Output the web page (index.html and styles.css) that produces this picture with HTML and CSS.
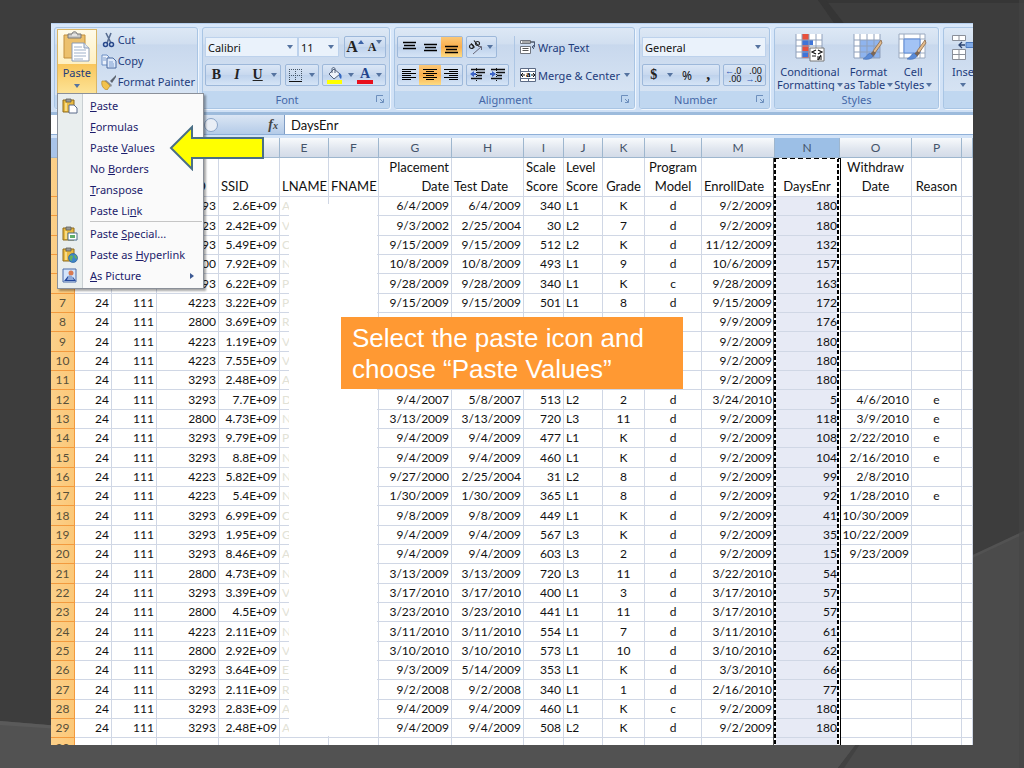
FILE: index.html
```html
<!DOCTYPE html>
<html lang="en">
<head>
<meta charset="utf-8">
<title>Paste Values</title>
<link rel="stylesheet" href="styles.css">
</head>
<body>
<svg class="defs" width="0" height="0" aria-hidden="true">
  <symbol id="caret" viewBox="0 0 6 4"><path d="M0 0h6L3 4z" fill="#5573a0"/></symbol>
  <symbol id="launcher" viewBox="0 0 8 8"><path d="M.5 7V.5H7M4 4l3 3M7.500 4v3.500H4" fill="none" stroke="#6d8fbd"/></symbol>
  <symbol id="clipboard" viewBox="0 0 16 16"><path d="M1 2h11v12H1z" fill="#e9b93f" stroke="#8d6a1c"/><path d="M4 1h5v3H4z" fill="#9a9a94" stroke="#5d5d58" stroke-width=".8"/><path d="M3 5h2v8H3z" fill="#f8dc88"/></symbol>
  <symbol id="brush" viewBox="0 0 20 22"><path d="M18 1 10 12l2 2 7-10z" fill="#e3bb8c" stroke="#8a6a4a" stroke-width=".8"/><path d="m10 12-3 3 3 3 3-4z" fill="#7b6656"/><path d="M7 14c-3 1-3 4-7 6 4 1 9 0 10-3z" fill="#5b8bd6" stroke="#3f69b0" stroke-width=".5"/></symbol>
</svg>
<main class="slide">
  <svg class="backdrop" viewBox="0 0 1024 768" preserveAspectRatio="none" aria-hidden="true">
    <path d="M0 0h1024v768H0z" fill="#3d3d3d"/>
    <path d="M818 0h206v3H824z" fill="#363636"/>
    <path d="M818 0l18 26h10L826 0z" fill="#353535"/>
    <path d="M1024 531v237H840l16-24 117-188z" fill="#4b4b4b"/>
    <path d="M1024 531v3l-60 28v-3z" fill="#525252"/>
    <path d="M0 721l60 5 800 14-22 28H0z" fill="#525252"/>
    <path d="M0 721l60 5v3l-60-4z" fill="#5a5a5a"/>
    <path d="M856 744l-18 24h6l16-24z" fill="#424242"/>
    <path d="M1019 0h5v768h-5z" fill="#454545" opacity=".6"/>
  </svg>
  <section class="sheet">
    <div class="ribbon">
      <div class="group">
        <div class="body clip">
          <button class="paste" type="button">
            <span class="paste-top"><svg width="30" height="32" viewBox="0 0 30 32"><path d="M2 4h21v23H2z" fill="#ecc06c" stroke="#c28f3c"/><path d="M6 7V3h4c0-3 5-3 5 0h4v4z" fill="#c9c9c6" stroke="#777"/><path d="M10 4h5" stroke="#fff"/><path d="M10 12h12l5 5v13H10z" fill="#fff" stroke="#8a9bb5"/><path d="M22 12v5h5" fill="#dde6f2" stroke="#8a9bb5"/><path d="M12 16h8M12 19h12M12 22h12M12 25h12M12 28h9" stroke="#9fb1c9"/></svg></span>
            <span class="paste-low">Paste<svg width="6" height="4"><use href="#caret"/></svg></span>
          </button>
          <div class="stack">
            <button class="tool" type="button"><svg width="16" height="16" viewBox="0 0 16 16"><path d="M5 1l5 10M10 1L6 11" stroke="#5a6f93" stroke-width="1.600"/><circle cx="4.500" cy="12.500" r="2" fill="none" stroke="#28488c" stroke-width="1.500"/><circle cx="10.500" cy="12.500" r="2" fill="none" stroke="#28488c" stroke-width="1.500"/></svg>Cut</button>
            <button class="tool" type="button"><svg width="16" height="16" viewBox="0 0 16 16"><path d="M1 2h5l2 2v8H1z" fill="#eaf1fb" stroke="#6b8ec4"/><path d="M6 5h6l3 3v7H6z" fill="#dce8f9" stroke="#49699f"/><path d="M8 9h4M8 11h5M8 13h5M2 5h3M2 7h3" stroke="#7f9fd0"/></svg>Copy</button>
            <button class="tool" type="button"><svg width="16" height="16" viewBox="0 0 16 16"><path d="M15 1l-6 6 2 2 4-6z" fill="#5c6470"/><path d="M5 6l6 5-1 2-7-6z" fill="#8b9099"/><path d="M1 7c3 0 4 0 8 5l-3 4C2 15 0 11 1 7z" fill="#f2c24d" stroke="#b98920" stroke-width=".7"/></svg>Format Painter</button>
          </div>
        </div>
        <div class="label"></div>
      </div>
      <div class="group">
        <div class="body">
          <div class="row">
            <label class="pick font"><select aria-label="Font"><option>Calibri</option></select><svg width="6" height="4"><use href="#caret"/></svg></label>
            <label class="pick size"><select aria-label="Font size"><option>11</option></select><svg width="6" height="4"><use href="#caret"/></svg></label>
            <span class="box push"><button type="button" class="serif big">A<svg class="tip" width="6" height="4"><path d="M0 4h6L3 0z" fill="#3d64a8"/></svg></button><button type="button" class="serif small">A<svg class="tip" width="6" height="4"><use href="#caret"/></svg></button></span>
          </div>
          <div class="row spread">
            <span class="box w76"><button type="button" class="serif">B</button><button type="button" class="serif it">I</button><button type="button" class="serif un">U</button><button type="button" class="thin" aria-label="Underline style"><svg width="6" height="4"><use href="#caret"/></svg></button></span>
            <span class="box w34"><button type="button" aria-label="Borders"><svg width="13" height="13" viewBox="0 0 13 13"><path d="M.5 0v12M6.500 0v12M12.500 0v12M0 .5h13M0 6.500h13" stroke="#456" stroke-dasharray="1 1"/><path d="M0 12.500h13" stroke="#111"/></svg></button><button type="button" class="thin" aria-label="Border style"><svg width="6" height="4"><use href="#caret"/></svg></button></span>
            <span class="box w64"><button type="button" aria-label="Fill colour"><svg width="17" height="17" viewBox="0 0 17 17"><path d="M1 13h15v4H1z" fill="#ff0"/><path d="M8 2l6 5-6 5-5-5z" fill="#eef3fa" stroke="#52617b"/><path d="M6 6V2c0-2 3-2 3 0v4" fill="none" stroke="#52617b"/><path d="M13 6c3 1 3 4 2 6-2-1-2-3-2-6z" fill="#3568c0"/></svg></button><button type="button" class="thin" aria-label="Fill colours"><svg width="6" height="4"><use href="#caret"/></svg></button><button type="button" class="serif fontcol">A</button><button type="button" class="thin" aria-label="Font colours"><svg width="6" height="4"><use href="#caret"/></svg></button></span>
          </div>
        </div>
        <div class="label launch">Font<svg width="8" height="8"><use href="#launcher"/></svg></div>
      </div>
      <div class="group">
        <div class="body align">
          <div class="rows">
            <div class="row">
              <span class="box w66"><button type="button" aria-label="Top align"><svg width="14" height="14"><path d="M1 2.500h13M2 5.500h11M1 8.500h13" stroke="#000" stroke-width="1.500"/></svg></button><button type="button" aria-label="Middle align"><svg width="14" height="14"><path d="M1 4.500h13M2 7.500h11M1 10.500h13" stroke="#000" stroke-width="1.500"/></svg></button><button type="button" class="on" aria-label="Bottom align"><svg width="14" height="14"><path d="M1 6.500h13M2 9.500h11M1 12.500h13" stroke="#000" stroke-width="1.500"/></svg></button></span>
              <span class="box w31"><button type="button" aria-label="Orientation"><svg width="15" height="15" viewBox="0 0 15 15"><g fill="none" stroke="#222" stroke-width="1.200"><circle cx="3.500" cy="6.500" r="2"/><path d="M3 3.500l3.500 4M6 .5l4 5"/><circle cx="9.500" cy="3.500" r="2"/></g><path d="M5 14l8-7M13.500 10V6.500H10" stroke="#667" fill="none"/></svg></button><button type="button" class="thin" aria-label="Orientation menu"><svg width="6" height="4"><use href="#caret"/></svg></button></span>
            </div>
            <div class="row">
              <span class="box w66"><button type="button" aria-label="Align left"><svg width="14" height="12"><path d="M0 .5h14M0 2.500h9M0 4.500h14M0 6.500h9M0 8.500h14M0 10.500h9" stroke="#000"/></svg></button><button type="button" class="on" aria-label="Center"><svg width="14" height="12"><path d="M0 .5h14M3 2.500h8M0 4.500h14M3 6.500h8M0 8.500h14M3 10.500h8" stroke="#000"/></svg></button><button type="button" aria-label="Align right"><svg width="14" height="12"><path d="M0 .5h14M5 2.500h9M0 4.500h14M5 6.500h9M0 8.500h14M5 10.500h9" stroke="#000"/></svg></button></span>
              <span class="box w43"><button type="button" aria-label="Decrease indent"><svg width="15" height="14"><path d="M1 1.500h14M7 4.500h8M7 7.500h5M1 10.500h11" stroke="#111" stroke-width="1.500"/><path d="M6.500 0v14" stroke="#111" stroke-dasharray="1 1"/><path d="M0 6l4-3v2h2v2H4v2z" fill="#3c63c4"/></svg></button><button type="button" aria-label="Increase indent"><svg width="15" height="14"><path d="M1 1.500h14M7 4.500h8M7 7.500h5M1 10.500h11" stroke="#111" stroke-width="1.500"/><path d="M6.500 0v14" stroke="#111" stroke-dasharray="1 1"/><path d="M6 6L2 3v2H0v2h2v2z" fill="#3c63c4"/></svg></button></span>
            </div>
          </div>
          <div class="rows divided">
            <button class="tool tall" type="button"><svg width="17" height="16" viewBox="0 0 17 16"><path d="M.5 1.500h10v3H.5zM.5 7.500h10v7H.5z" fill="#fff" stroke="#70757e"/><path d="M2 3h13M2.500 9.500h6M2.500 11.500h6" stroke="#555"/><path d="M11 3h3.500v5H12m2-2l-2 2 2 2" fill="none" stroke="#4a5a78"/></svg>Wrap Text</button>
            <button class="tool tall" type="button"><svg width="17" height="16" viewBox="0 0 17 16"><path d="M.5 1.500h15v13H.5z" fill="#fff" stroke="#5b6a84"/><path d="M0 4.500h15M0 11.500h15M8.500 1v3M8.500 11v3" stroke="#5b6a84"/><path d="M1 8h4M11 8h4M3 6L1 8l2 2M13 6l2 2-2 2" stroke="#111" fill="none"/><text x="6" y="10" font-family="Liberation Serif" font-weight="700" font-size="9">a</text></svg>Merge &amp; Center<svg class="after" width="6" height="4"><use href="#caret"/></svg></button>
          </div>
        </div>
        <div class="label launch">Alignment<svg width="8" height="8"><use href="#launcher"/></svg></div>
      </div>
      <div class="group">
        <div class="body">
          <div class="row"><label class="pick general"><select aria-label="Number format"><option>General</option></select><svg width="6" height="4"><use href="#caret"/></svg></label></div>
          <div class="row spread">
            <span class="box w78"><button type="button" class="serif">$</button><button type="button" class="thin" aria-label="Currency menu"><svg width="6" height="4"><use href="#caret"/></svg></button><button type="button" class="pct">%</button><button type="button" class="serif comma">,</button></span>
            <span class="box w43"><button type="button" class="dec"><span><i>←</i>.0</span><span>.00</span></button><button type="button" class="dec"><span>.00</span><span><i>→</i>.0</span></button></span>
          </div>
        </div>
        <div class="label launch">Number<svg width="8" height="8"><use href="#launcher"/></svg></div>
      </div>
      <div class="group">
        <div class="body styles">
          <button class="large" type="button"><svg width="30" height="30" viewBox="0 0 30 30"><path d="M1 1h26v24H1z" fill="#fff"/><path d="M7 1h7v24H7z" fill="#e8503c"/><path d="M7 7h11v5H7zM7 18h6v6H7z" fill="#3f74d8"/><path d="M1 1v24M7 1v24M14 1v24M21 1v24M27 1v24M1 7h26M1 13h26M1 19h26M1 25h26" stroke="#8fa0bb"/><path d="M15 15h14v13H15z" fill="#fff" stroke="#777"/><path d="M21 17l-4 2 4 2M17 23h4M23 17l4 2-4 2M22 24h5M22 26h5M26 22l-3 5" fill="none" stroke="#111" stroke-width="1.200"/></svg><span>Conditional</span><span>Formatting<svg width="6" height="4"><use href="#caret"/></svg></span></button>
          <button class="large" type="button"><svg width="30" height="30" viewBox="0 0 30 30"><path d="M1 1h26v24H1z" fill="#fff"/><path d="M7 7h20v18H7z" fill="#8fb4ee"/><path d="M1 1v24M7 1v24M14 1v24M21 1v24M27 1v24M1 7h26M1 13h26M1 19h26M1 25h26" stroke="#8fa0bb"/><use href="#brush" x="10" y="6" width="20" height="22"/></svg><span>Format</span><span>as Table<svg width="6" height="4"><use href="#caret"/></svg></span></button>
          <button class="large" type="button"><svg width="30" height="30" viewBox="0 0 30 30"><path d="M1 1h26v24H1z" fill="#fff" stroke="#9aa9bf"/><path d="M6 1v24M22 1v24M1 6h26M1 20h26" stroke="#9aa9bf"/><path d="M6 6h16v14H6z" fill="#a3c3f5" stroke="#5f8cd8"/><use href="#brush" x="9" y="6" width="20" height="22"/></svg><span>Cell</span><span>Styles<svg width="6" height="4"><use href="#caret"/></svg></span></button>
        </div>
        <div class="label">Styles</div>
      </div>
      <div class="group cut">
        <div class="body styles">
          <button class="large" type="button"><svg width="24" height="30" viewBox="0 0 24 30"><path d="M1.500 2.500h13v5h-13zM8 2.500v5M1.500 16.500h13v10h-13zM1.500 21.500h13M8 16.500v10" fill="#fff" stroke="#8a8f99"/><path d="M15 9.500h12v5H15z" fill="#7fa9e6" stroke="#4f7cc0"/><path d="M14 12H8m3-3l-3 3 3 3" fill="none" stroke="#2d4470" stroke-width="1.300"/></svg><span>Inse</span><span><svg width="6" height="4"><use href="#caret"/></svg></span></button>
        </div>
        <div class="label"></div>
      </div>
    </div>

    <div class="formula">
      <div class="namebox"></div>
      <div class="fx"><span class="knob"></span><span class="fxmark">f<small>x</small></span></div>
      <input type="text" value="DaysEnr" aria-label="Formula">
    </div>

    <table>
      <colgroup><col class="c24"><col class="c37"><col class="c45"><col class="c62"><col class="c61"><col class="c49"><col class="c50"><col class="c73"><col class="c72"><col class="c40"><col class="c39"><col class="c42"><col class="c57"><col class="c73"><col class="c65"><col class="c72"><col class="c50"><col></colgroup>
      <thead>
        <tr><th class="corner"><th><th><th><th><th>E<th>F<th>G<th>H<th>I<th>J<th>K<th>L<th>M<th class="sel">N<th>O<th>P<th></tr>
      </thead>
      <tbody>
        <tr class="titles"><th><td><td><td class="id">D<td>SSID<td>LNAME<td>FNAME<td>Placement<br>Date<td>Test Date<td>Scale<br>Score<td>Level<br>Score<td>Grade<td>Program<br>Model<td>EnrollDate<td class="host">DaysEnr<span class="ants"></span><td>Withdraw<br>Date<td>Reason<td></tr>
        <tr><th><td><td><td>93<td>2.6E+09<td class="host">A<span class="cover"></span><td><td>6/4/2009<td>6/4/2009<td>340<td>L1<td>K<td>d<td>9/2/2009<td>180<td><td><td></tr>
        <tr><th><td><td><td>23<td>2.42E+09<td>V<td><td>9/3/2002<td>2/25/2004<td>30<td>L2<td>7<td>d<td>9/2/2009<td>180<td><td><td></tr>
        <tr><th><td><td><td>93<td>5.49E+09<td>C<td><td>9/15/2009<td>9/15/2009<td>512<td>L2<td>K<td>d<td>11/12/2009<td>132<td><td><td></tr>
        <tr><th><td><td><td>00<td>7.92E+09<td>N<td><td>10/8/2009<td>10/8/2009<td>493<td>L1<td>9<td>d<td>10/6/2009<td>157<td><td><td></tr>
        <tr><th><td><td><td>93<td>6.22E+09<td>P<td><td>9/28/2009<td>9/28/2009<td>340<td>L1<td>K<td>c<td>9/28/2009<td>163<td><td><td></tr>
        <tr><th>7<td>24<td>111<td>4223<td>3.22E+09<td>P<td><td>9/15/2009<td>9/15/2009<td>501<td>L1<td>8<td>d<td>9/15/2009<td>172<td><td><td></tr>
        <tr><th>8<td>24<td>111<td>2800<td>3.69E+09<td>R<td><td><td><td><td><td><td><td>9/9/2009<td>176<td><td><td></tr>
        <tr><th>9<td>24<td>111<td>4223<td>1.19E+09<td>V<td><td><td><td><td><td><td><td>9/2/2009<td>180<td><td><td></tr>
        <tr><th>10<td>24<td>111<td>4223<td>7.55E+09<td>V<td><td><td><td><td><td><td><td>9/2/2009<td>180<td><td><td></tr>
        <tr><th>11<td>24<td>111<td>3293<td>2.48E+09<td>A<td><td><td><td><td><td><td><td>9/2/2009<td>180<td><td><td></tr>
        <tr><th>12<td>24<td>111<td>3293<td>7.7E+09<td>D<td><td>9/4/2007<td>5/8/2007<td>513<td>L2<td>2<td>d<td>3/24/2010<td>5<td>4/6/2010<td>e<td></tr>
        <tr><th>13<td>24<td>111<td>2800<td>4.73E+09<td>N<td><td>3/13/2009<td>3/13/2009<td>720<td>L3<td>11<td>d<td>9/2/2009<td>118<td>3/9/2010<td>e<td></tr>
        <tr><th>14<td>24<td>111<td>3293<td>9.79E+09<td>P<td><td>9/4/2009<td>9/4/2009<td>477<td>L1<td>K<td>d<td>9/2/2009<td>108<td>2/22/2010<td>e<td></tr>
        <tr><th>15<td>24<td>111<td>3293<td>8.8E+09<td>N<td><td>9/4/2009<td>9/4/2009<td>460<td>L1<td>K<td>d<td>9/2/2009<td>104<td>2/16/2010<td>e<td></tr>
        <tr><th>16<td>24<td>111<td>4223<td>5.82E+09<td>N<td><td>9/27/2000<td>2/25/2004<td>31<td>L2<td>8<td>d<td>9/2/2009<td>99<td>2/8/2010<td><td></tr>
        <tr><th>17<td>24<td>111<td>4223<td>5.4E+09<td>N<td><td>1/30/2009<td>1/30/2009<td>365<td>L1<td>8<td>d<td>9/2/2009<td>92<td>1/28/2010<td>e<td></tr>
        <tr><th>18<td>24<td>111<td>3293<td>6.99E+09<td>C<td><td>9/8/2009<td>9/8/2009<td>449<td>L1<td>K<td>d<td>9/2/2009<td>41<td>10/30/2009<td><td></tr>
        <tr><th>19<td>24<td>111<td>3293<td>1.95E+09<td>G<td><td>9/4/2009<td>9/4/2009<td>567<td>L3<td>K<td>d<td>9/2/2009<td>35<td>10/22/2009<td><td></tr>
        <tr><th>20<td>24<td>111<td>3293<td>8.46E+09<td>A<td><td>9/4/2009<td>9/4/2009<td>603<td>L3<td>2<td>d<td>9/2/2009<td>15<td>9/23/2009<td><td></tr>
        <tr><th>21<td>24<td>111<td>2800<td>4.73E+09<td>N<td><td>3/13/2009<td>3/13/2009<td>720<td>L3<td>11<td>d<td>3/22/2010<td>54<td><td><td></tr>
        <tr><th>22<td>24<td>111<td>3293<td>3.39E+09<td>V<td><td>3/17/2010<td>3/17/2010<td>400<td>L1<td>3<td>d<td>3/17/2010<td>57<td><td><td></tr>
        <tr><th>23<td>24<td>111<td>2800<td>4.5E+09<td>V<td><td>3/23/2010<td>3/23/2010<td>441<td>L1<td>11<td>d<td>3/17/2010<td>57<td><td><td></tr>
        <tr><th>24<td>24<td>111<td>4223<td>2.11E+09<td>N<td><td>3/11/2010<td>3/11/2010<td>554<td>L1<td>7<td>d<td>3/11/2010<td>61<td><td><td></tr>
        <tr><th>25<td>24<td>111<td>2800<td>2.92E+09<td>V<td><td>3/10/2010<td>3/10/2010<td>573<td>L1<td>10<td>d<td>3/10/2010<td>62<td><td><td></tr>
        <tr><th>26<td>24<td>111<td>3293<td>3.64E+09<td>E<td><td>9/3/2009<td>5/14/2009<td>353<td>L1<td>K<td>d<td>3/3/2010<td>66<td><td><td></tr>
        <tr><th>27<td>24<td>111<td>3293<td>2.11E+09<td>R<td><td>9/2/2008<td>9/2/2008<td>340<td>L1<td>1<td>d<td>2/16/2010<td>77<td><td><td></tr>
        <tr><th>28<td>24<td>111<td>3293<td>2.83E+09<td>A<td><td>9/4/2009<td>9/4/2009<td>460<td>L1<td>K<td>c<td>9/2/2009<td>180<td><td><td></tr>
        <tr><th>29<td>24<td>111<td>3293<td>2.48E+09<td>A<td><td>9/4/2009<td>9/4/2009<td>508<td>L2<td>K<td>d<td>9/2/2009<td>180<td><td><td></tr>
        <tr><th>30<td><td><td><td><td><td><td><td><td><td><td><td><td><td><td><td><td></tr>
      </tbody>
    </table>

    <div class="menu" role="menu">
      <button type="button" role="menuitem"><span class="ico"><svg width="16" height="16" viewBox="0 0 16 16"><use href="#clipboard"/><path d="M7 7h5l3 3v5H7z" fill="#fff" stroke="#5a6b8a"/></svg></span><span><u>P</u>aste</span></button>
      <button type="button" role="menuitem"><span class="ico"></span><span><u>F</u>ormulas</span></button>
      <button type="button" role="menuitem"><span class="ico"></span><span>Paste <u>V</u>alues</span></button>
      <button type="button" role="menuitem"><span class="ico"></span><span>No <u>B</u>orders</span></button>
      <button type="button" role="menuitem"><span class="ico"></span><span><u>T</u>ranspose</span></button>
      <button type="button" role="menuitem"><span class="ico"></span><span>Paste Li<u>n</u>k</span></button>
      <hr>
      <button type="button" role="menuitem"><span class="ico"><svg width="16" height="16" viewBox="0 0 16 16"><use href="#clipboard"/><path d="M6 7h9v7H6z" fill="#fff" stroke="#4b6e8a"/><path d="M8 9h5v3H8z" fill="#5fae6d"/></svg></span><span>Paste <u>S</u>pecial...</span></button>
      <button type="button" role="menuitem"><span class="ico"><svg width="16" height="16" viewBox="0 0 16 16"><use href="#clipboard"/><circle cx="11" cy="11" r="4.500" fill="#3f86c8" stroke="#2b6298" stroke-width=".7"/><path d="M8 9c2-2 3 0 3 1s-2 2-1 4c-2 0-3-3-2-5zM12 8c2 0 3 2 3 4l-2-1z" fill="#66b35a"/></svg></span><span>Paste as <u>H</u>yperlink</span></button>
      <button type="button" role="menuitem"><span class="ico"><svg width="16" height="16" viewBox="0 0 16 16"><path d="M1 1h13v13H1z" fill="#d3e4fa" stroke="#4d6ca8"/><path d="M2 13l4-5 3 3 2-2 3 4z" fill="#24489c"/><circle cx="9" cy="5" r="2.500" fill="#d87a52"/><path d="M5 12l2-5 3 1 2 4" fill="#8fa9d8"/></svg></span><span><u>A</u>s Picture</span><svg class="sub" width="4" height="6"><path d="M0 0v6l4-3z" fill="#3d5a94"/></svg></button>
    </div>

    <svg class="arrow" width="96" height="46" viewBox="0 0 96 46" role="img" aria-label="Arrow"><path d="M2 23L23 2v11h71v20H23v11z" fill="#ff0" stroke="#4a6f86" stroke-width="2"/></svg>
    <p class="callout">Select the paste icon and choose “Paste Values”</p>
  </section>
</main>
</body>
</html>
```
FILE: styles.css
```css
* { box-sizing: border-box; }
body { margin: 0; background: #3d3d3d; font-family: "Noto Sans", sans-serif; font-size: 11px; color: #1e3c7c; }
button { font: inherit; color: inherit; background: none; border: 0; padding: 0; margin: 0; }
svg { flex: none; display: block; }
.defs { position: absolute; }

.slide { position: relative; display: flex; height: 100vh; padding: 23px 51px; }
.backdrop { position: absolute; inset: 0; width: 100%; height: 100%; }
.sheet { position: relative; flex: 1; min-width: 0; overflow: hidden; background: #fff; display: flex; flex-direction: column; }

/* Ribbon */
.ribbon { flex: none; display: grid; grid-template-columns: 144px 188px 241px 131px 165px 1fr; gap: 4px; padding: 3px 0 3px 3px; height: 92px; background: linear-gradient(#d9e8fa, #cfe0f5); border-top: 1px solid #b7d0ee; border-bottom: 3px solid #9dbbdc; overflow: hidden; }
.group { display: flex; flex-direction: column; min-width: 0; overflow: hidden; border: 1px solid #a9c5e4; border-radius: 3px; background: linear-gradient(#dde8f5, #d1dff0 20%, #c8d8ed 21%, #dbe7f5); box-shadow: 1px 1px 0 #f0f6fd; }
.cut { border-right: 0; border-radius: 3px 0 0 3px; }
.body { flex: 1; display: flex; flex-direction: column; gap: 6px; padding: 8px 3px 0 2px; }
.label { flex: none; height: 17px; line-height: 17px; position: relative; text-align: center; background: #c0d7f0; color: #4668a8; }
.launch { padding-right: 18px; }
.label svg { position: absolute; right: 5px; top: 4px; }
.row { display: flex; height: 22px; gap: 3px; align-items: center; }
.spread { justify-content: space-between; }
.rows { display: flex; flex-direction: column; gap: 6px; }

.clip { flex-direction: row; gap: 4px; padding: 1px 2px 0; }
.paste { width: 40px; display: flex; flex-direction: column; border: 1px solid #d9b667; border-bottom: 0; height: 66px; }
.paste-top { display: flex; justify-content: center; padding-top: 1px; width: 100%; height: 34px; background: linear-gradient(#fffbe9, #fff0c2); }
.paste-low { flex: 1; width: 100%; display: flex; flex-direction: column; align-items: center; line-height: 17px; gap: 3px; background: linear-gradient(#f9c65c, #fde59a); }
.stack { display: flex; flex-direction: column; }
.tool { display: flex; align-items: center; gap: 1px; height: 21px; white-space: nowrap; }
.tall { height: 22px; }
.after { margin-left: 3px; }

.pick { position: relative; display: flex; height: 20px; background: #eaf2fb; border: 1px solid #bdd2ec; }
.pick select { appearance: none; width: 100%; border: 0; background: none; padding: 0 2px; font: inherit; color: #111; }
.pick svg { position: absolute; right: 4px; top: 7px; }
.font { width: 93px; }
.size { width: 41px; margin-left: -3px; }
.general { width: 124px; }
.push { margin-left: auto; width: 42px; }

.box { display: flex; height: 22px; border: 1px solid #9db8da; border-radius: 2px; background: linear-gradient(#dbe7f6, #c7d8ee 50%, #bed2ec 51%, #d5e4f6); }
.box button { flex: 1; display: flex; align-items: center; justify-content: center; min-width: 0; }
.box .thin { flex: 0 0 12px; }
.box .on { background: linear-gradient(#fbc878, #f9ae4c 50%, #fddc84); }
.w76 { width: 76px; } .w34 { width: 34px; } .w64 { width: 64px; }
.w66 { width: 66px; } .w31 { width: 31px; } .w43 { width: 43px; } .w78 { width: 78px; }
.serif { font-family: "Liberation Serif", serif; font-weight: 700; font-size: 14px; color: #222; }
.it { font-style: italic; } .un { text-decoration: underline; }
.big { font-size: 16px; } .small { font-size: 12px; }
.tip { align-self: flex-start; margin-top: 3px; }
.box .fontcol { flex: 0 0 16px; height: 17px; align-self: center; border-bottom: 4px solid #e8101c; color: #23448c; line-height: 13px; }
.pct { color: #111; font-size: 12px; }
.comma { font-size: 16px; }
.box .dec { flex-direction: column; align-items: flex-end; padding-right: 3px; font-size: 9px; line-height: 8px; color: #111; }
.dec i { color: #2f58b8; font-style: normal; }

.align { flex-direction: row; gap: 5px; }
.divided { border-left: 1px solid #adc6e4; padding-left: 5px; height: 51px; }
.styles { flex-direction: row; gap: 1px; padding: 5px 2px 0; }
.large { display: flex; flex-direction: column; align-items: center; line-height: 13px; white-space: nowrap; }
.large span { display: flex; align-items: center; gap: 2px; }
.large > svg { margin-bottom: 2px; }
.cut .large { margin-left: 5px; }
.cut .large span:last-child { height: 13px; }

/* Formula bar */
.formula { flex: none; display: flex; height: 20px; border-bottom: 1px solid #8fb0d8; background: #fff; }
.namebox { width: 152px; border-right: 1px solid #9db8da; }
.fx { width: 82px; display: flex; align-items: center; justify-content: space-between; padding: 0 6px 0 1px; background: linear-gradient(#dbe6f4, #b4cbe8); border-right: 1px solid #7f9cc4; }
.knob { width: 14px; height: 14px; border-radius: 50%; background: #e9eef6; border: 1px solid #8aa4c8; }
.fxmark { font: italic 700 14px "Liberation Serif", serif; color: #444; }
.fxmark small { font-size: 10px; }
.formula input { flex: 1; min-width: 0; border: 0; padding: 0 6px; background: #fff; font: 13px Lato, sans-serif; color: #111; }

/* Worksheet */
table { flex: none; width: 100%; table-layout: fixed; border-collapse: separate; border-spacing: 0; border-top: 3px solid #d3e3f7; font-family: Lato, sans-serif; font-size: 12px; line-height: 18px; color: #111; }
.c24 { width: 24px; } .c37 { width: 37px; } .c39 { width: 39px; } .c40 { width: 40px; } .c42 { width: 42px; }
.c45 { width: 45px; } .c49 { width: 49px; } .c50 { width: 50px; } .c57 { width: 57px; } .c61 { width: 61px; }
.c62 { width: 62px; } .c65 { width: 65px; } .c72 { width: 72px; } .c73 { width: 73px; }
th, td { padding: 0 2px; font-weight: 400; white-space: nowrap; border-right: 1px solid #d0d7e5; border-bottom: 1px solid #d0d7e5; text-align: right; }
thead th { height: 20px; padding: 0; text-align: center; color: #44546a; background: linear-gradient(#f8fafc, #dfe5ee 60%, #d3dbe8); border-color: #9eb6ce; }
thead .corner { background: #a9c4e9; }
thead .sel { background: #9cbfe6; }
tbody th { height: 19px; padding: 0; text-align: center; color: #57503a; background: linear-gradient(90deg, #fbd08a, #fcc878); border-color: #f29a3e; }
tbody tr:nth-child(3n) th { height: 20px; }
tbody .titles th { height: 39px; }
.titles td { vertical-align: bottom; font-size: 13px; line-height: 19px; }
td:nth-child(6) { color: #e2e2d6; text-align: left; }
td:nth-child(11) { text-align: left; }
td:nth-child(12), td:nth-child(13), td:nth-child(17) { text-align: center; }
td:nth-child(15) { background: #e7eaf5; border-right-color: #e7eaf5; }
.titles td:nth-child(n+5) { text-align: left; color: #111; }
.titles td:nth-child(8) { text-align: right; }
.titles td:nth-child(12), .titles td:nth-child(13), .titles td:nth-child(n+15) { text-align: center; }
.titles td:nth-child(15) { background: #fff; }
.titles .id { padding-right: 12px; }
.host { position: relative; }
.cover { position: absolute; z-index: 1; top: 7px; left: 9px; width: 88px; height: 532px; background: #fff; }
.ants { position: absolute; z-index: 1; top: 0; left: -2px; right: -2px; height: 600px; border: 0 solid #555; border-width: 0 1px 0 1px; border-right-color: #000;
  background: repeating-linear-gradient(90deg, #000 0 5px, #fff 5px 8px) 0 0 / 100% 1px no-repeat,
    repeating-linear-gradient(#000 0 4px, #fff 4px 6px) 0 0 / 2px 100% no-repeat,
    linear-gradient(#fff, #fff) 100% 0 / 1px 100% no-repeat,
    repeating-linear-gradient(#000 0 4px, #fff 4px 6px) 100% 0 / 3px 100% no-repeat; }

/* Paste menu */
.menu { position: absolute; z-index: 3; left: 6px; top: 70px; width: 147px; padding: 1px 0 2px; border: 1px solid #8b9099; background: linear-gradient(90deg, #e9eeee 24px, #c9cfd2 24px 25px, #fafafa 25px); box-shadow: 2px 2px 2px rgba(0, 0, 0, .35); color: #1c1c6c; }
.menu button { display: flex; align-items: center; width: 100%; height: 21px; text-align: left; white-space: nowrap; }
.menu .ico { width: 32px; padding-left: 4px; }
.menu hr { margin: 0 1px 1px 32px; border: 0; border-top: 1px solid #c5c5c5; }
.menu .sub { margin-left: auto; margin-right: 9px; }

/* Annotations */
.arrow { position: absolute; z-index: 4; left: 118px; top: 102px; }
.callout { position: absolute; z-index: 4; left: 290px; top: 294px; width: 342px; margin: 0; padding: 6px 30px 4px 11px; background: #f93; color: #fff; font: 26px/31px "Liberation Sans", Arial, sans-serif; }
```
